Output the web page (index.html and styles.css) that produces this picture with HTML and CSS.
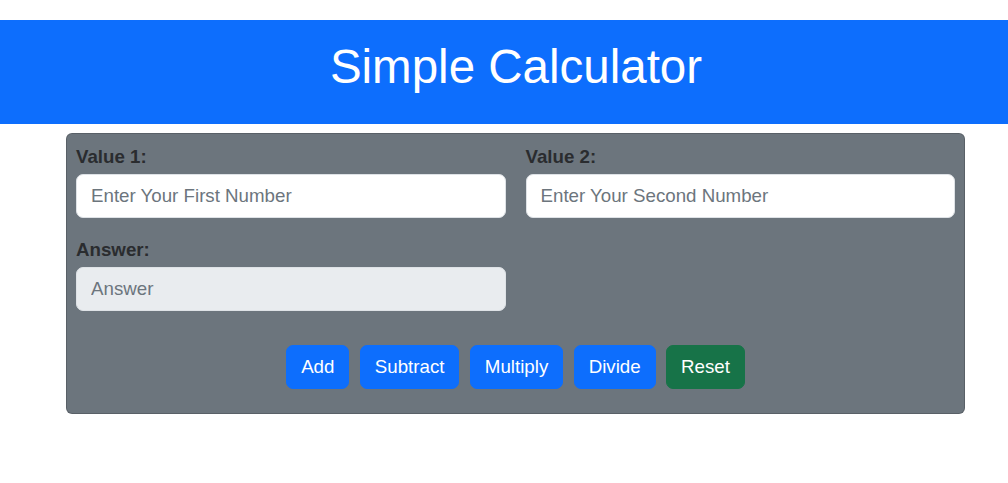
FILE: index.html
```html
<!DOCTYPE html>
<html lang="en">
<head>
<meta charset="utf-8">
<title>Simple Calculator</title>
<link rel="stylesheet" href="styles.css">
</head>
<body>
  <header class="banner">
    <h1 class="banner-title">Simple Calculator</h1>
  </header>
  <main class="calc-card">
    <div class="fields">
      <div class="field">
        <label class="field-label" for="v1">Value 1:</label>
        <input class="field-input" id="v1" type="text" placeholder="Enter Your First Number">
      </div>
      <div class="field">
        <label class="field-label" for="v2">Value 2:</label>
        <input class="field-input" id="v2" type="text" placeholder="Enter Your Second Number">
      </div>
      <div class="field field-answer">
        <label class="field-label" for="ans">Answer:</label>
        <input class="field-input field-readonly" id="ans" type="text" placeholder="Answer" readonly>
      </div>
    </div>
    <div class="actions">
      <button class="btn btn-blue" type="button">Add</button>
      <button class="btn btn-blue" type="button">Subtract</button>
      <button class="btn btn-blue" type="button">Multiply</button>
      <button class="btn btn-blue" type="button">Divide</button>
      <button class="btn btn-green" type="button">Reset</button>
    </div>
  </main>
</body>
</html>
```
FILE: styles.css
```css
* {
  box-sizing: border-box;
}

body {
  margin: 0;
  font-family: "Liberation Sans", Arial, sans-serif;
  font-size: 18.72px;
  line-height: 1.5;
  color: #212529;
  background: #fff;
}

.banner {
  margin-top: 20px;
  background: #0d6efd;
  color: #fff;
  padding: 18.7px 0 19.5px 24px;
  text-align: center;
}

.banner-title {
  margin: 0 0 9.4px;
  font-size: 47.5px;
  font-weight: 400;
  line-height: 1.18;
}

.calc-card {
  margin: 9px 43px 0 66px;
  background: #6c757d;
  border: 1px solid rgba(0, 0, 0, 0.175);
  border-radius: 6px;
  padding: 9.5px 9px 23.5px 9px;
}

.fields {
  display: grid;
  grid-template-columns: 1fr 1fr;
  column-gap: 20px;
  row-gap: 18.5px;
}

.field-label {
  display: block;
  font-weight: 700;
  color: #2a2c2f;
  margin-bottom: 2.5px;
}

.field-input {
  display: block;
  width: 100%;
  height: 44px;
  padding: 7px 14px;
  font-family: inherit;
  font-size: 18.72px;
  line-height: 1.5;
  color: #212529;
  background: #fff;
  border: 1px solid #dee2e6;
  border-radius: 7px;
  outline: none;
}

.field-input::placeholder {
  color: #6c757d;
  opacity: 1;
}

.field-readonly {
  background: #e9ecef;
}

.actions {
  display: flex;
  justify-content: center;
  gap: 10.4px;
  margin-top: 34.5px;
}

.btn {
  height: 44px;
  padding: 7px 14px;
  font-family: inherit;
  font-size: 18.72px;
  line-height: 1.5;
  color: #fff;
  border: 1px solid transparent;
  border-radius: 7px;
  cursor: pointer;
}

.btn-blue {
  background: #0d6efd;
  border-color: #0d6efd;
}

.btn-green {
  background: #177348;
  border-color: #177348;
}
```
